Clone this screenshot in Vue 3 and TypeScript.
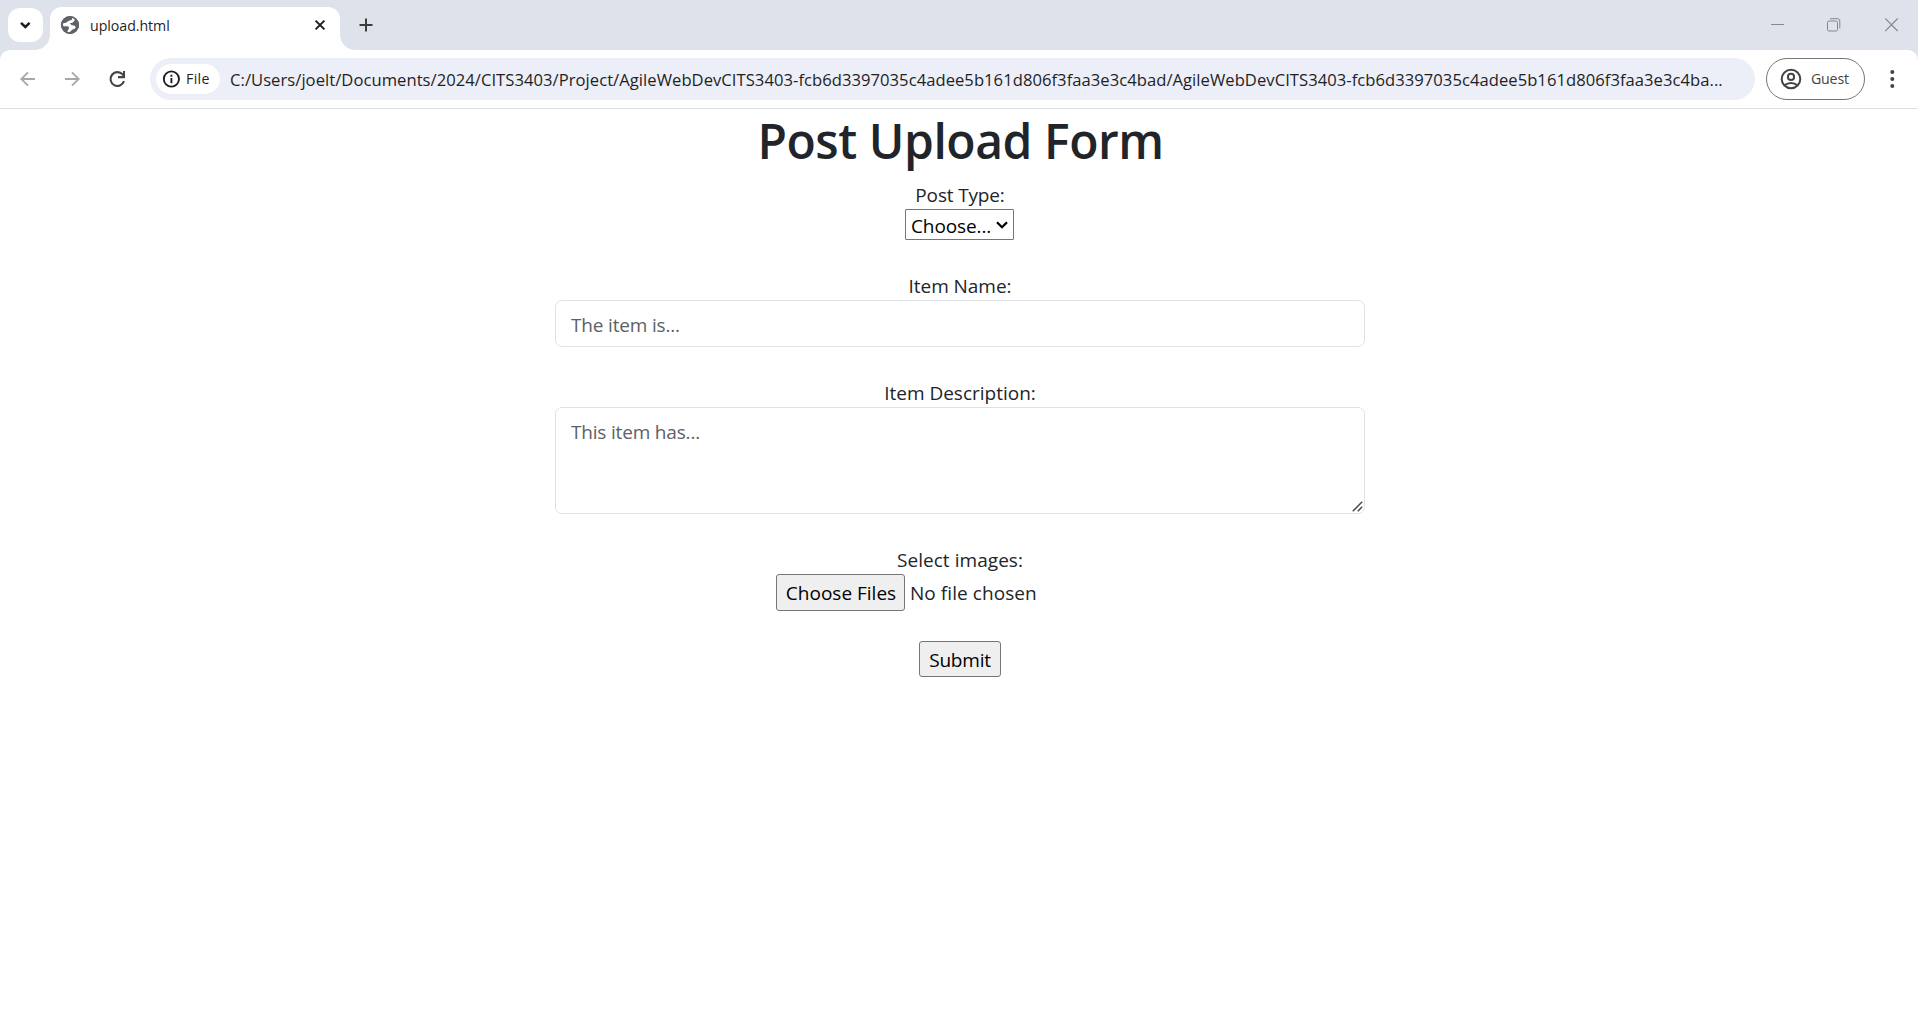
<script setup lang="ts">
import { ref } from 'vue'

const tabTitle = 'upload.html'
const address =
  'C:/Users/joelt/Documents/2024/CITS3403/Project/AgileWebDevCITS3403-fcb6d3397035c4adee5b161d806f3faa3e3c4bad/AgileWebDevCITS3403-fcb6d3397035c4adee5b161d806f3faa3e3c4ba...'

const postType = ref('')
const itemName = ref('')
const itemDescription = ref('')
</script>

<template>
  <div class="window">
    <header class="tab-strip">
      <button class="tab-search" aria-label="Search tabs">
        <svg width="35" height="34" viewBox="0 0 35 34"><path d="M13 14.8l4.3 4.2 4.3-4.2" fill="none" stroke="#1f1f1f" stroke-width="2.5" /></svg>
      </button>
      <div class="tab">
        <svg class="globe" width="20" height="20" viewBox="0 0 20 20">
          <circle cx="10" cy="10" r="9" fill="#5f6368" />
          <path d="M12.2 2.6C12.6 4.6 11.6 5.3 9.6 5.6C7.8 5.9 7.6 7.4 5.9 7.8L2.6 8.4C2.4 10.6 3.4 11.4 5.8 11.3C8.2 11.2 9.2 11.8 9 13.2C8.8 14.4 7.4 14.6 7.5 17.2C10.6 17.6 10.9 15.6 12.2 14.8C13.4 14.1 14.8 14.2 15.6 12.6C16.1 10.8 13.6 10.4 12.1 10.2C10.6 10 10.7 8.9 9.7 8.6C10.6 7.5 12.7 8.4 13.2 7C13.6 6 14.9 6 14.8 4.5C14 3.4 13.2 3 12.2 2.6Z" fill="#fff" />
          <circle cx="10" cy="10" r="8.2" fill="none" stroke="#5f6368" stroke-width="1.6" />
        </svg>
        <span class="tab-title">{{ tabTitle }}</span>
        <svg class="tab-close" width="12" height="12" viewBox="0 0 12 12"><path d="M1.6 1.6l8.8 8.8M10.4 1.6l-8.8 8.8" stroke="#1f1f1f" stroke-width="2" /></svg>
      </div>
      <svg class="new-tab" width="14" height="14" viewBox="0 0 14 14"><path d="M7 .5v13M.5 7h13" stroke="#3c3c3c" stroke-width="2" /></svg>
      <div class="window-controls">
        <svg width="14" height="14" viewBox="0 0 14 14"><path d="M0 6.5h13" stroke="#858789" /></svg>
        <svg class="restore" width="14" height="14" viewBox="0 0 14 14"><g fill="none" stroke="#858789"><rect x=".5" y="3" width="10" height="10" rx="1.5" /><path d="M3 .7h7.5a2.3 2.3 0 0 1 2.3 2.3v7.5" /></g></svg>
        <svg width="14" height="14" viewBox="0 0 14 14"><path d="M.2.5l12.5 12.5M12.7 .5L.2 13" stroke="#858789" stroke-width="1.1" /></svg>
      </div>
    </header>

    <nav class="toolbar">
      <svg class="nav-icon" width="16" height="16" viewBox="0 0 16 16"><path d="M15 8H2M8 1.3L1.3 8L8 14.7" fill="none" stroke="#a8a8a8" stroke-width="1.9" /></svg>
      <svg class="nav-icon forward" width="16" height="16" viewBox="0 0 16 16"><path d="M1 8h13M8 1.3L14.7 8L8 14.7" fill="none" stroke="#a8a8a8" stroke-width="1.9" /></svg>
      <svg class="nav-icon reload" width="18" height="18" viewBox="0 0 18 18"><path d="M16 11.2A6.9 6.9 0 1 1 14.6 4.4L16 6" fill="none" stroke="#444" stroke-width="2.1" /><path d="M16 1v6.1H10" fill="none" stroke="#444" stroke-width="2.1" /></svg>
      <div class="omnibox">
        <div class="chip">
          <svg width="18" height="18" viewBox="0 0 18 18"><circle cx="9.4" cy="9" r="7.6" fill="none" stroke="#1f1f1f" stroke-width="1.9" /><path d="M9.4 8v5.2M9.4 4.8v1.9" stroke="#1f1f1f" stroke-width="1.9" /></svg>
          <span class="chip-label">File</span>
        </div>
        <span class="address">{{ address }}</span>
      </div>
      <button class="profile">
        <svg width="22" height="22" viewBox="0 0 22 22"><g fill="none" stroke="#444" stroke-width="2"><circle cx="11" cy="11" r="9.3" /><circle cx="11" cy="8.9" r="3.1" /><path d="M4.6 17.3C8 14.2 14 14.2 17.4 17.3" /></g></svg>
        <span class="profile-label">Guest</span>
      </button>
      <svg class="menu" width="6" height="20" viewBox="0 0 6 20"><g fill="#444"><circle cx="3.3" cy="3" r="2" /><circle cx="3.3" cy="10" r="2" /><circle cx="3.3" cy="17" r="2" /></g></svg>
    </nav>

    <main class="page">
      <h1>Post Upload Form</h1>
      <form class="form" @submit.prevent>
        <label class="post-type-label" for="type">Post Type:</label>
        <div class="select">
          <select id="type" v-model="postType">
            <option value="">Choose...</option>
          </select>
          <svg width="12" height="8" viewBox="0 0 12 8"><path d="M1 1.2l5 5 5-5" fill="none" stroke="#000" stroke-width="2.3" /></svg>
        </div>

        <label class="name-label" for="name">Item Name:</label>
        <input id="name" v-model="itemName" class="control" type="text" placeholder="The item is..." />

        <label class="description-label" for="description">Item Description:</label>
        <div class="textarea">
          <textarea id="description" v-model="itemDescription" class="control" placeholder="This item has..."></textarea>
          <svg width="11" height="11" viewBox="0 0 11 11"><path d="M.8 10.2L10.2.8M5.8 10.2l4.4-4.4" stroke="#4a4a4a" stroke-width="1.5" /></svg>
        </div>

        <label class="images-label">Select images:</label>
        <div class="files">
          <button type="button" class="button choose">Choose Files</button>
          <span class="no-file">No file chosen</span>
        </div>

        <button type="submit" class="button submit">Submit</button>
      </form>
    </main>
  </div>
</template>

<style>
body {
  margin: 0;
  background: #fff;
}
</style>

<style scoped>
.window {
  height: 1012px;
  overflow: hidden;
  display: flex;
  flex-direction: column;
  background: #dee2ea;
  font-family: "Open Sans", "Noto Sans", sans-serif;
}
* {
  box-sizing: border-box;
}
svg {
  display: block;
  flex: none;
}
button {
  font: inherit;
  padding: 0;
}

/* Tab strip */
.tab-strip {
  height: 50px;
  flex: none;
  display: flex;
  align-items: flex-start;
}
.tab-search {
  width: 35px;
  height: 34px;
  margin: 8px 7px 0 8px;
  border: 0;
  border-radius: 12px;
  background: #fff;
}
.tab {
  position: relative;
  width: 290px;
  height: 43px;
  margin-top: 7px;
  padding: 0 15px 7px 10px;
  display: flex;
  align-items: center;
  border-radius: 12px 12px 0 0;
  background: #fff;
}
.tab::before,
.tab::after {
  content: "";
  position: absolute;
  bottom: 0;
  width: 15px;
  height: 15px;
}
.tab::before {
  right: 100%;
  background: radial-gradient(circle at 0 0, transparent 14.5px, #fff 15.2px);
}
.tab::after {
  left: 100%;
  background: radial-gradient(circle at 100% 0, transparent 14.5px, #fff 15.2px);
}
.tab-title {
  flex: 1;
  margin-left: 10px;
  padding-top: 2px;
  font-size: 14.2px;
  line-height: 20px;
  letter-spacing: -0.05px;
  color: #1f1f1f;
}
.tab-close {
  margin-right: -1px;
}
.new-tab {
  margin: 18px 0 0 19px;
}
.window-controls {
  flex: 1;
  display: flex;
  justify-content: flex-end;
  gap: 43px;
  margin: 18px 19px 0 0;
}
.restore {
  margin: 0 1px 0 -1px;
}

/* Toolbar */
.toolbar {
  height: 59px;
  flex: none;
  padding: 8px 23px 8px 20px;
  display: flex;
  align-items: flex-start;
  border-bottom: 1px solid #dfe0e1;
  border-radius: 10px 10px 0 0;
  background: #fff;
}
.nav-icon {
  margin-top: 13px;
}
.forward {
  margin-left: 28px;
}
.reload {
  margin: 12px 0 0 28px;
}
.omnibox {
  flex: 1;
  height: 42px;
  margin-left: 24px;
  padding-left: 6px;
  display: flex;
  align-items: center;
  border-radius: 21px;
  background: #eceef8;
}
.chip {
  width: 64px;
  height: 30px;
  padding-left: 6px;
  display: flex;
  align-items: center;
  border-radius: 15px;
  background: #fff;
}
.chip-label {
  margin-left: 6px;
  font-size: 14.2px;
  line-height: 20px;
  letter-spacing: 0.35px;
  color: #1f1f1f;
}
.address {
  margin-left: 10px;
  padding-top: 2px;
  font-size: 16.6px;
  line-height: 24px;
  letter-spacing: 0.044px;
  white-space: nowrap;
  color: #1f1f1f;
}
.profile {
  width: 99px;
  height: 42px;
  margin-left: 11px;
  padding-left: 13px;
  display: flex;
  align-items: center;
  border: 1px solid #747775;
  border-radius: 21px;
  background: #fff;
}
.profile-label {
  margin-left: 9px;
  font-size: 14.2px;
  line-height: 20px;
  letter-spacing: -0.2px;
  color: #444;
}
.menu {
  margin: 11px 0 0 24px;
}

/* Uploaded page */
.page {
  flex: 1;
  display: flex;
  flex-direction: column;
  align-items: center;
  background: #fff;
  color: #212529;
}
h1 {
  height: 60px;
  margin: 0 0 10px 3px;
  padding-top: 2px;
  font-size: 48px;
  font-weight: 600;
  line-height: 60px;
  letter-spacing: -0.45px;
}
.form {
  width: 810px;
  margin-left: 2px;
  display: flex;
  flex-direction: column;
  align-items: center;
  font-size: 19px;
  line-height: 30px;
}
label {
  height: 30px;
  padding-top: 1px;
}
.post-type-label {
  letter-spacing: -0.155px;
}
.name-label {
  letter-spacing: -0.044px;
}
.images-label {
  letter-spacing: 0.05px;
}
.select {
  position: relative;
  width: 109px;
  height: 31px;
  margin: 0 1px 30px 0;
}
.select select {
  appearance: none;
  display: block;
  width: 100%;
  height: 100%;
  margin: 0;
  padding: 1px 0 0 5px;
  border: 1px solid #767676;
  border-radius: 1px;
  background: #fff;
  color: #000;
  font: inherit;
  letter-spacing: -0.111px;
}
.select svg {
  position: absolute;
  right: 6px;
  top: 12px;
  pointer-events: none;
}
.control {
  display: block;
  width: 100%;
  margin: 0;
  border: 1px solid #dee2e6;
  border-radius: 7px;
  background: #fff;
  color: #212529;
  font: inherit;
}
.control::placeholder {
  color: #5c6166;
  opacity: 1;
}
input.control {
  height: 47px;
  margin-bottom: 30px;
  padding: 9px 15px 7px;
  letter-spacing: -0.17px;
}
.textarea {
  position: relative;
  width: 100%;
  height: 107px;
  margin-bottom: 30px;
}
.textarea textarea {
  height: 100%;
  padding: 9px 15px 7px;
  resize: none;
  letter-spacing: -0.18px;
}
.textarea svg {
  position: absolute;
  right: 2px;
  bottom: 2px;
}
.files {
  align-self: flex-start;
  margin: 0 0 30px 221px;
  display: flex;
  align-items: center;
}
.button {
  border: 1px solid #767676;
  border-radius: 3px;
  background: #efefef;
  color: #000;
}
.choose {
  width: 129px;
  height: 37px;
  padding-left: 1px;
}
.no-file {
  margin-left: 5px;
  letter-spacing: 0.064px;
}
.submit {
  width: 82px;
  height: 36px;
  padding-top: 2px;
  letter-spacing: -0.216px;
}
</style>
